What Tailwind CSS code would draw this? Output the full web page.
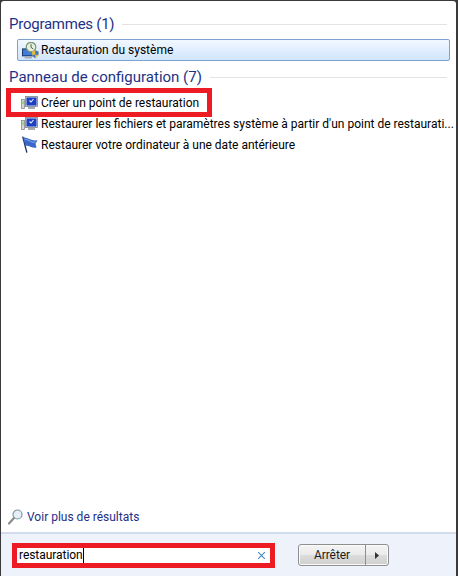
<!DOCTYPE html>
<html><head><meta charset="utf-8">
<script src="https://cdn.jsdelivr.net/npm/@tailwindcss/browser@4"></script>
</head>
<body class="m-0 bg-white">
<div class="relative w-[458px] h-[576px] overflow-hidden font-['Roboto',sans-serif] text-[12px] leading-[16px] text-black bg-[#3a3a3a] pt-px pl-px pr-[2px]">
  <div class="flex flex-col h-full bg-white rounded-tl-[3px] rounded-tr-[3px]">
    <div class="flex-1 flex flex-col pt-[13px]">
      <div class="flex items-center h-[20px] pl-[8px] pr-[9px] gap-2">
        <span class="text-[15px] tracking-[-0.25px] text-[#1e3287] whitespace-nowrap">Programmes (1)</span>
        <div class="flex-1 h-px bg-[#e3e3e3]"></div>
      </div>
      <div class="mt-[5px] ml-[16px] mr-[6px] h-[22px] flex items-center gap-[2px] pl-[4px] rounded-[2px] border border-[#7da2ce] bg-gradient-to-b from-[#f2f8ff] to-[#d0e5fd]">
        <svg class="w-[17px] h-[17px] shrink-0" viewBox="0 0 16 16"><rect x="0" y="6" width="11" height="7.500" fill="#1d3a78"/><rect x="1" y="7" width="9" height="5.500" fill="#3f7fd8"/><rect x="2.500" y="13.500" width="7" height="2" fill="#a9adb0"/><circle cx="8.500" cy="4.800" r="4.500" fill="#e6efe0" stroke="#76936f" stroke-width="1.100"/><path d="M8.500 2v3l2 1.500" fill="none" stroke="#3c5c3c" stroke-width=".9"/><path d="M9.500 9l3-1.200 3 1.200v3.500l-3 3-3-3z" fill="#e8bd3c"/><path d="M12.500 7.800l3 1.200v3h-3zM9.500 12h3v3.500l-3-3z" fill="#3f74c8"/></svg>
        <span class="whitespace-nowrap">Restauration du système</span>
      </div>
      <div class="flex items-center h-[20px] mt-[6px] pl-[8px] pr-[9px] gap-2">
        <span class="text-[15px] text-[#1e3287] whitespace-nowrap">Panneau de configuration (7)</span>
        <div class="flex-1 h-px bg-[#e3e3e3]"></div>
      </div>
      <div class="flex flex-col mt-[5px] pl-[20px]">
        <div class="h-[21px] flex items-center gap-[2px]">
          <svg class="w-[18px] h-[16px] shrink-0" viewBox="0 0 18 16"><rect x=".5" y="4.500" width="3" height="9" fill="#d3d6d3" stroke="#7c7c7c" stroke-width=".7"/><rect x="1.500" y="6" width="1" height="3" fill="#6fd04a"/><rect x="4.500" y="1.500" width="12" height="10" fill="#d4d8dc" stroke="#7b858f" stroke-width=".8"/><rect x="5.500" y="2.500" width="10" height="8" fill="#1c3fc4"/><path d="M8.500 5.500l1.500 1.500 2.500-3" fill="none" stroke="#e8eefc" stroke-width="1.100"/><rect x="7" y="12" width="7" height="2" fill="#a5abb0"/></svg>
          <span class="whitespace-nowrap">Créer un point de restauration</span>
        </div>
        <div class="h-[21px] flex items-center gap-[2px]">
          <svg class="w-[18px] h-[16px] shrink-0" viewBox="0 0 18 16"><rect x=".5" y="4.500" width="3" height="9" fill="#d3d6d3" stroke="#7c7c7c" stroke-width=".7"/><rect x="1.500" y="6" width="1" height="3" fill="#6fd04a"/><rect x="4.500" y="1.500" width="12" height="10" fill="#d4d8dc" stroke="#7b858f" stroke-width=".8"/><rect x="5.500" y="2.500" width="10" height="8" fill="#1c3fc4"/><path d="M8.500 5.500l1.500 1.500 2.500-3" fill="none" stroke="#e8eefc" stroke-width="1.100"/><rect x="7" y="12" width="7" height="2" fill="#a5abb0"/></svg>
          <span class="whitespace-nowrap">Restaurer les fichiers et paramètres système à partir d'un point de restaurati...</span>
        </div>
        <div class="h-[21px] flex items-center gap-[2px]">
          <svg class="w-[18px] h-[17px] shrink-0" viewBox="0 0 18 17"><path d="M1 .5l1.500.2L6.500 16.500l-1.300.3z" fill="#1f3568"/><path d="M2 .8c2.500 1.500 4.500 1.200 7 2.500 2.500 1.200 4.500 1.200 7.500 1l-2 3.500 1 3.700c-3 .6-5 0-7.200-1.200-1.500-.8-2.500-.8-3.800-.3z" fill="#3a68c8"/><path d="M3.500 3c2.500 1 4 1.200 6 2.300 1.800 1 3.300 1 5 .8" fill="none" stroke="#8fb2ee" stroke-width=".9"/></svg>
          <span class="whitespace-nowrap">Restaurer votre ordinateur à une date antérieure</span>
        </div>
      </div>
      <div class="mt-auto mb-[6px] pl-[7px] flex items-center gap-[4px] h-[18px]">
        <svg class="w-[15px] h-[16px] shrink-0" viewBox="0 0 15 16"><circle cx="9.500" cy="5.500" r="4.500" fill="#e4eff6" stroke="#7f98a5" stroke-width="1.200"/><path d="M6 9l-5 5.500" stroke="#8a8f8a" stroke-width="2.200" stroke-linecap="round"/></svg>
        <span class="text-[#1e2f85] whitespace-nowrap">Voir plus de résultats</span>
      </div>
    </div>
    <div class="h-[44px] bg-[#eef2fa] border-t-2 border-[#d2dcea] flex items-center pl-[13px] pr-[66px]">
      <div class="w-[259px] h-[20px] flex items-center bg-white pl-[2px] pr-[11px] ml-[3px]">
        <span class="whitespace-nowrap border-r border-black leading-[15px] tracking-[-0.05px]">restauration</span>
        <svg class="ml-auto w-[7px] h-[7px]" viewBox="0 0 7 7"><path d="M0 0l7 7M7 0L0 7" stroke="#4a86c0" stroke-width="1.100"/></svg>
      </div>
      <div class="ml-[22px] flex h-[22px] shrink-0 rounded-[3px] border border-[#8e8f8f] bg-[linear-gradient(#f4f4f4,#ebebeb_48%,#dcdcdc_52%,#cfcfcf)] shadow-[inset_0_0_0_1px_#fbfbfb]">
        <span class="w-[67px] flex items-center justify-center border-r border-[#8e8f8f] text-[#1c1c1c] tracking-[-0.1px]">Arrêter</span>
        <span class="w-[22px] flex items-center justify-center"><svg class="w-[4px] h-[7px]" viewBox="0 0 4 7"><path d="M0 0l4 3.500-4 3.500z" fill="#333"/></svg></span>
      </div>
    </div>
  </div>
  <div class="absolute left-[6px] top-[88px] w-[206px] h-[29px] border-[5px] border-[#ed1c24]"></div>
  <div class="absolute left-[12px] top-[543px] w-[263px] h-[25px] border-[5px] border-[#ed1c24]"></div>
</div>
</body></html>
